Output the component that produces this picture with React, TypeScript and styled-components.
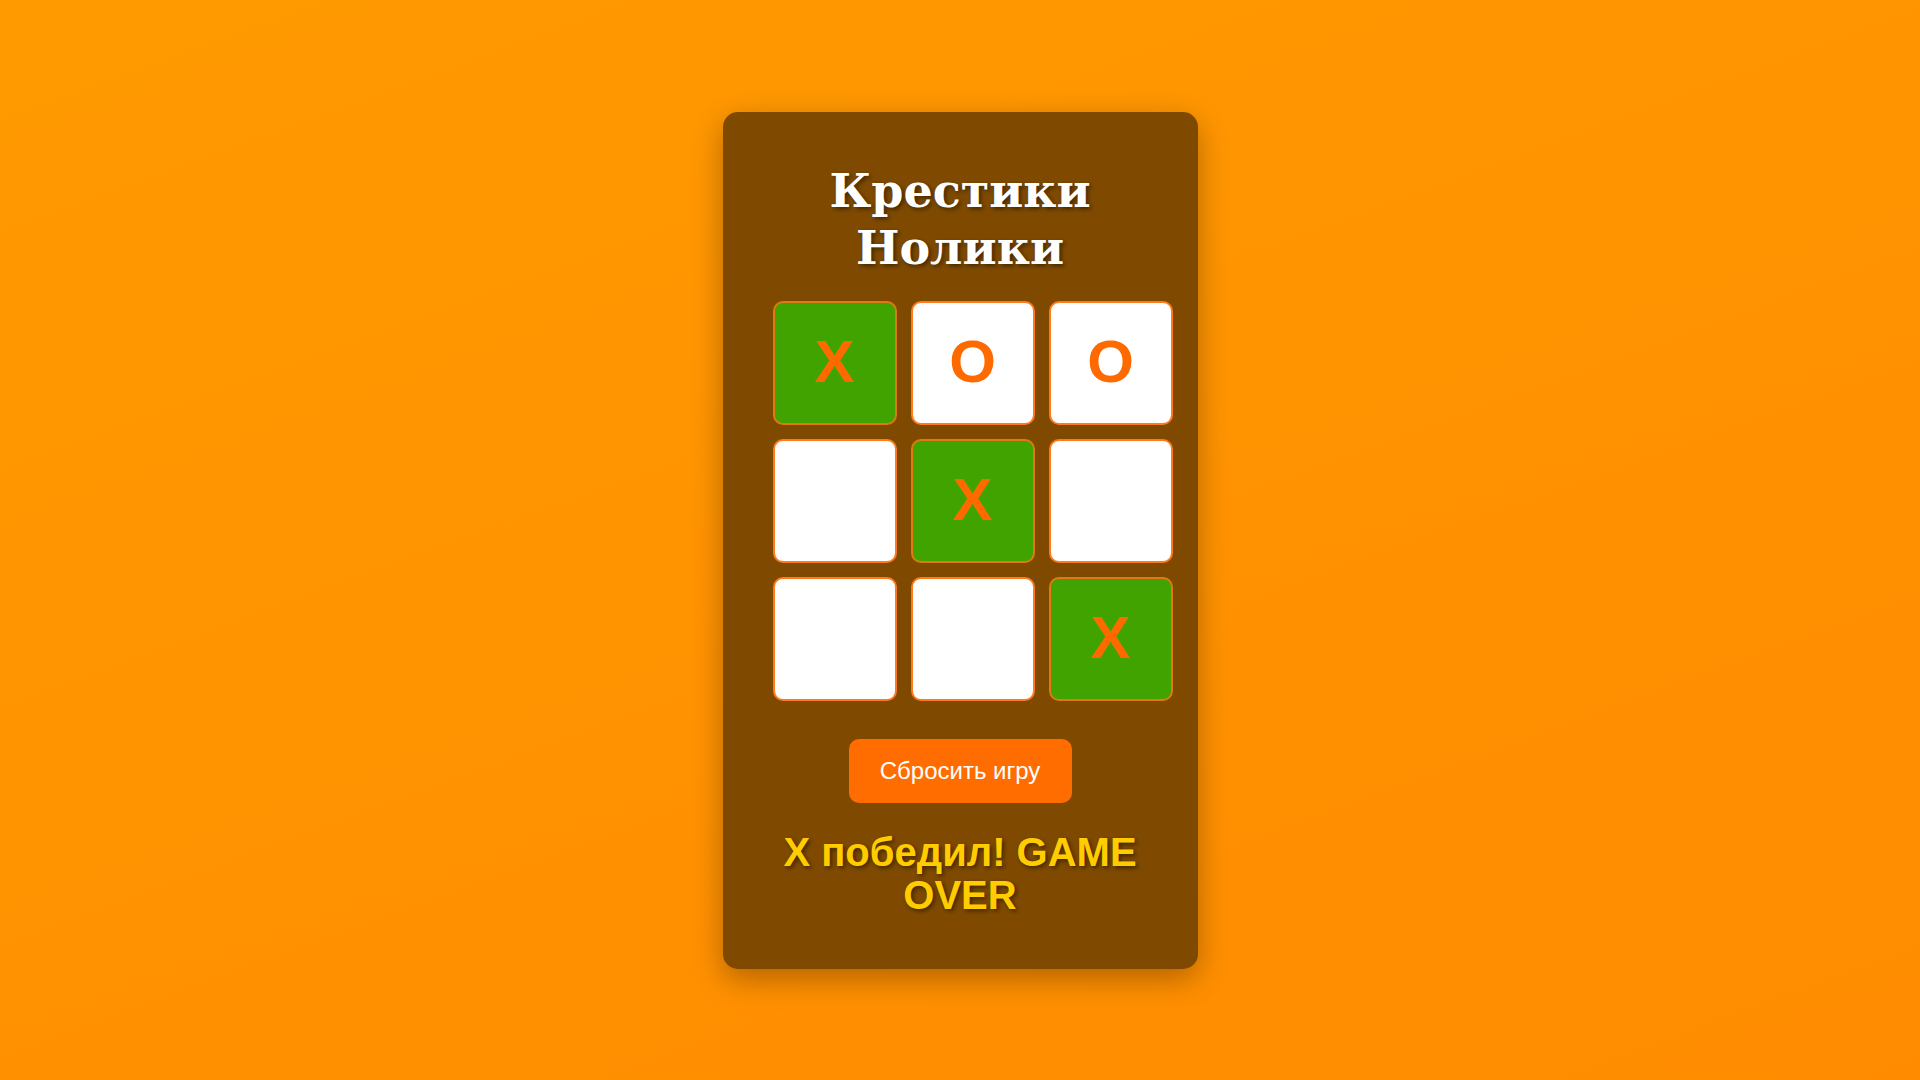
import React from "react";
import styled, { createGlobalStyle } from "styled-components";

const GlobalStyle = createGlobalStyle`
  html, body {
    margin: 0;
    padding: 0;
    height: 100%;
  }
  body {
    font-family: "Liberation Sans", Arial, sans-serif;
    background: linear-gradient(160deg, #ff9a00 0%, #ff8c00 100%);
  }
  #root {
    min-height: 100vh;
  }
`;

const Page = styled.main`
  min-height: 100vh;
  display: flex;
  align-items: center;
  justify-content: center;
`;

const Card = styled.section`
  width: 475px;
  box-sizing: border-box;
  padding: 51px 25px 52px;
  background: #7f4a00;
  border-radius: 15px;
  box-shadow: 0 10px 30px rgba(0, 0, 0, 0.3);
  display: flex;
  flex-direction: column;
  align-items: center;
`;

const Title = styled.h1`
  margin: 0;
  font-family: "DejaVu Serif", "Liberation Serif", serif;
  font-weight: bold;
  font-size: 46px;
  line-height: 57px;
  color: #ffffff;
  text-align: center;
  text-shadow: 2px 2px 4px rgba(0, 0, 0, 0.5);
`;

const Board = styled.div`
  margin-top: 24px;
  align-self: flex-end;
  display: grid;
  grid-template-columns: repeat(3, 124px);
  grid-auto-rows: 124px;
  gap: 14px;
`;

const Cell = styled.button<{ $win: boolean }>`
  box-sizing: border-box;
  width: 124px;
  height: 124px;
  padding: 0 0 3px;
  border: 2px solid ${(p) => (p.$win ? "#e07a10" : "#ff7a1a")};
  border-radius: 10px;
  background: ${(p) => (p.$win ? "#40a300" : "#ffffff")};
  color: #ff6a00;
  font-family: "Liberation Sans", Arial, sans-serif;
  font-weight: bold;
  font-size: 60px;
  display: flex;
  align-items: center;
  justify-content: center;
  cursor: pointer;
`;

const ResetButton = styled.button`
  margin-top: 38px;
  width: 223px;
  height: 64px;
  border: none;
  border-radius: 10px;
  background: #ff6d00;
  color: #ffffff;
  font-family: "Liberation Sans", Arial, sans-serif;
  font-size: 24px;
  cursor: pointer;
`;

const Status = styled.p`
  margin: 28px 0 0;
  font-family: "Liberation Sans", Arial, sans-serif;
  font-weight: bold;
  font-size: 40px;
  line-height: 43px;
  color: #ffcc00;
  text-align: center;
  text-shadow: 2px 2px 4px rgba(0, 0, 0, 0.5);
`;

const board: (string | null)[] = ["X", "O", "O", null, "X", null, null, null, "X"];
const winLine = [0, 4, 8];

export default function App() {
  return (
    <>
      <GlobalStyle />
      <Page>
        <Card>
          <Title>
            Крестики
            <br />
            Нолики
          </Title>
          <Board>
            {board.map((v, i) => (
              <Cell key={i} $win={winLine.includes(i)}>
                {v ?? ""}
              </Cell>
            ))}
          </Board>
          <ResetButton>Сбросить игру</ResetButton>
          <Status>X победил! GAME OVER</Status>
        </Card>
      </Page>
    </>
  );
}
